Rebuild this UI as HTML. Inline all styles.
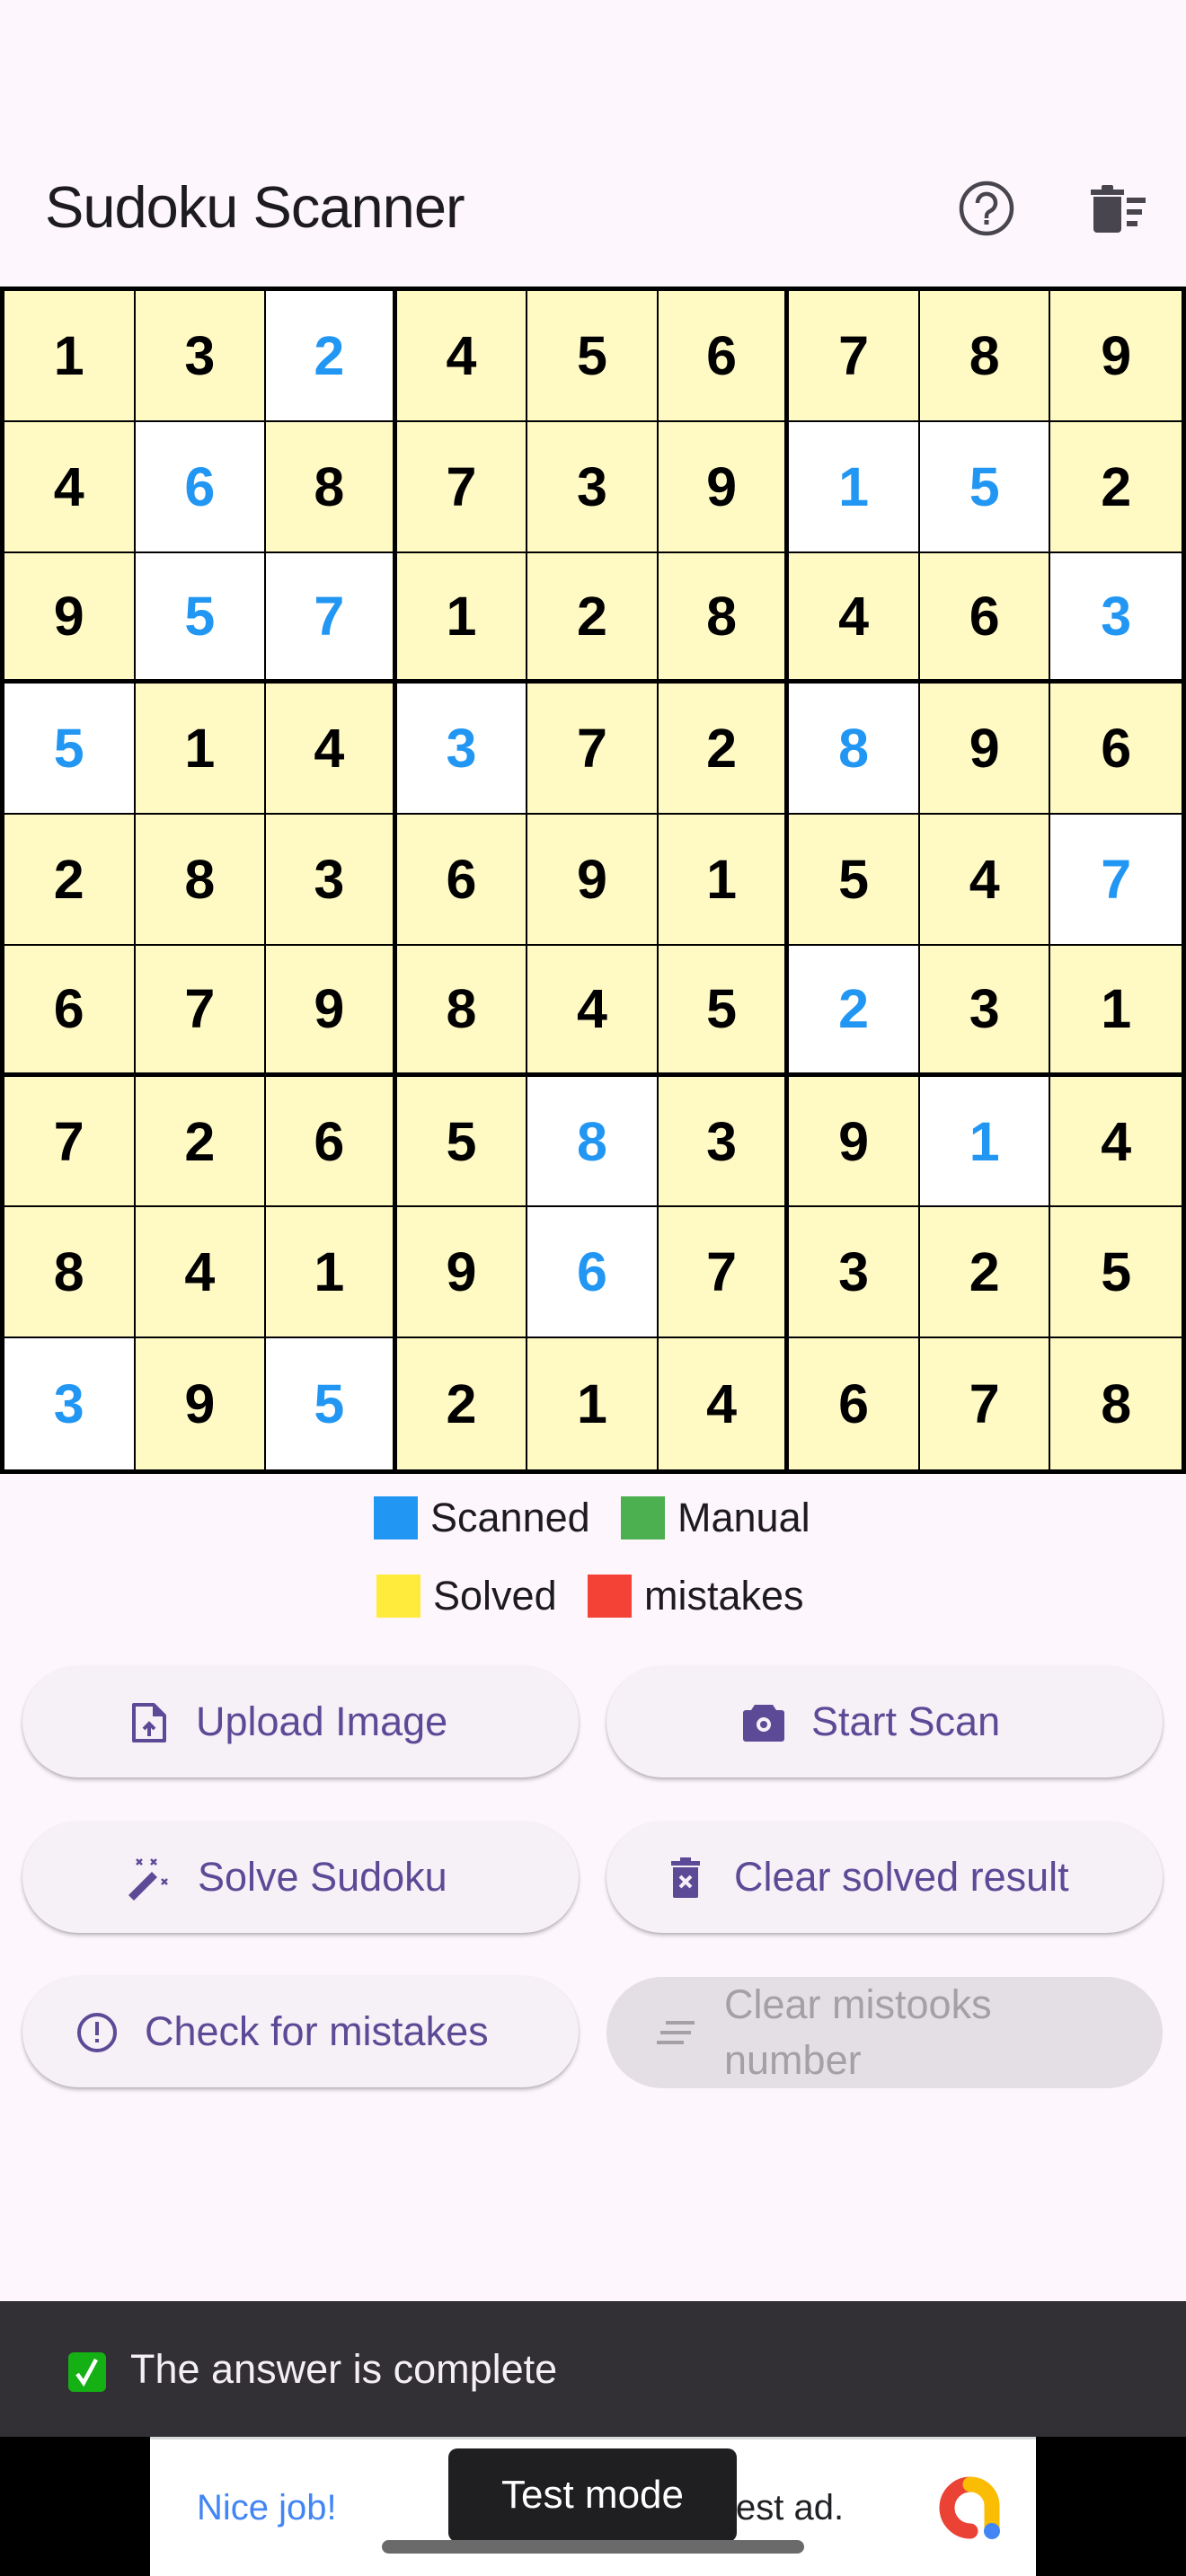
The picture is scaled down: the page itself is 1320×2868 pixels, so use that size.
<!DOCTYPE html>
<html><head><meta charset="utf-8">
<style>
*{box-sizing:border-box;margin:0;padding:0}
html,body{width:1320px;height:2868px;overflow:hidden;background:#fdf7fd;font-family:"Liberation Sans",Arial,sans-serif;position:relative}
.title{position:absolute;left:50px;top:193px;font-size:65px;color:#1d1b20;letter-spacing:-1px}
.g{position:absolute;left:0;top:319px;width:1320px;height:1322px;border:5px solid #000;display:grid;grid-template-columns:repeat(9,1fr);grid-template-rows:repeat(9,1fr);background:#000}
.g div{background:#fff9c4;border-right:2px solid #000;border-bottom:2px solid #000;display:flex;align-items:center;justify-content:center;font-weight:bold;font-size:61px;color:#000}
.g div.w{background:#fff;color:#2196f3}
.g div:nth-child(9n+3),.g div:nth-child(9n+6){border-right-width:5px}
.g div:nth-child(9n){border-right:0}
.g div:nth-child(n+19):nth-child(-n+27),.g div:nth-child(n+46):nth-child(-n+54){border-bottom-width:5px}
.g div:nth-child(n+73){border-bottom:0}
.lg{position:absolute;font-size:45px;color:#1d1b20;display:flex;align-items:center}
.sq{width:49px;height:48px;display:inline-block;margin-right:14px}
.btn{position:absolute;width:619px;height:124px;border-radius:62px;background:#f6f0f7;box-shadow:0 3px 4px rgba(0,0,0,.22),0 1px 2px rgba(0,0,0,.1);color:#5c4a96;font-size:45px;display:flex;align-items:center}
.btn svg{position:absolute}
.btn span{position:absolute}
.dis{background:#e3dfe5;box-shadow:none;color:#a3a0a6}
.snack{position:absolute;left:0;top:2562px;width:1320px;height:151px;background:#322f35;color:#f4eff4;font-size:45px}
.ad{position:absolute;left:0;top:2713px;width:1320px;height:155px;background:#000}
.adw{position:absolute;left:167px;top:0;width:986px;height:155px;background:#fff;border-top:3px solid #d8dadc}
</style></head><body>
<div class="title">Sudoku Scanner</div>
<svg style="position:absolute;left:1066px;top:200px" width="64" height="64" viewBox="0 0 64 64"><circle cx="32" cy="32" r="28" fill="none" stroke="#48454e" stroke-width="4.5"/><path d="M22 26a10 10 0 1 1 14 9c-3 1.5-4 3-4 6v2" fill="none" stroke="#48454e" stroke-width="4.5"/><rect x="29.5" y="45" width="5" height="5" fill="#48454e"/></svg>
<svg style="position:absolute;left:1214px;top:206px" width="66" height="54" viewBox="0 0 66 54"><rect x="0" y="5" width="37" height="6" fill="#48454e"/><rect x="12" y="0" width="13" height="6" rx="2" fill="#48454e"/><path d="M3 13h31v36a4 4 0 0 1-4 4H7a4 4 0 0 1-4-4z" fill="#48454e"/><rect x="40" y="14" width="21" height="6" fill="#48454e"/><rect x="40" y="27" width="17" height="6" fill="#48454e"/><rect x="40" y="40" width="12" height="6" fill="#48454e"/></svg>

<div class="g">
<div>1</div><div>3</div><div class="w">2</div><div>4</div><div>5</div><div>6</div><div>7</div><div>8</div><div>9</div>
<div>4</div><div class="w">6</div><div>8</div><div>7</div><div>3</div><div>9</div><div class="w">1</div><div class="w">5</div><div>2</div>
<div>9</div><div class="w">5</div><div class="w">7</div><div>1</div><div>2</div><div>8</div><div>4</div><div>6</div><div class="w">3</div>
<div class="w">5</div><div>1</div><div>4</div><div class="w">3</div><div>7</div><div>2</div><div class="w">8</div><div>9</div><div>6</div>
<div>2</div><div>8</div><div>3</div><div>6</div><div>9</div><div>1</div><div>5</div><div>4</div><div class="w">7</div>
<div>6</div><div>7</div><div>9</div><div>8</div><div>4</div><div>5</div><div class="w">2</div><div>3</div><div>1</div>
<div>7</div><div>2</div><div>6</div><div>5</div><div class="w">8</div><div>3</div><div>9</div><div class="w">1</div><div>4</div>
<div>8</div><div>4</div><div>1</div><div>9</div><div class="w">6</div><div>7</div><div>3</div><div>2</div><div>5</div>
<div class="w">3</div><div>9</div><div class="w">5</div><div>2</div><div>1</div><div>4</div><div>6</div><div>7</div><div>8</div>
</div>

<div class="lg" style="left:416px;top:1664px"><span class="sq" style="background:#2196f3"></span>Scanned</div>
<div class="lg" style="left:691px;top:1664px"><span class="sq" style="background:#4caf50"></span>Manual</div>
<div class="lg" style="left:419px;top:1751px"><span class="sq" style="background:#ffeb3b"></span>Solved</div>
<div class="lg" style="left:654px;top:1751px"><span class="sq" style="background:#f44336"></span>mistakes</div>

<div class="btn" style="left:25px;top:1855px">
<svg style="left:120px;top:40px" width="42" height="46" viewBox="0 0 42 46"><path d="M4 3h22l12 12v28H4z" fill="none" stroke="#5c4a96" stroke-width="4" stroke-linejoin="round"/><path d="M25 3v13h13" fill="#5c4a96"/><path d="M21 38V24M15 30l6-6 6 6" fill="none" stroke="#5c4a96" stroke-width="4"/></svg>
<span style="left:193px">Upload Image</span></div>
<div class="btn" style="left:675px;top:1855px">
<svg style="left:151px;top:39px" width="48" height="46" viewBox="0 0 48 46"><path d="M14 4h20l4 6h6a3 3 0 0 1 3 3v29a3 3 0 0 1-3 3H4a3 3 0 0 1-3-3V13a3 3 0 0 1 3-3h6z" fill="#5c4a96"/><circle cx="24" cy="26" r="8" fill="#f6f0f7"/><circle cx="24" cy="26" r="4" fill="#5c4a96"/></svg>
<span style="left:228px">Start Scan</span></div>
<div class="btn" style="left:25px;top:2028px">
<svg style="left:115px;top:38px" width="52" height="50" viewBox="0 0 52 50"><path d="M3 44l26-26 6 6-26 26z" fill="#5c4a96"/><path d="M12 4l6 6M18 4l-6 6M28 4l6 6M34 4l-6 6M40 26l6 6M46 26l-6 6" stroke="#5c4a96" stroke-width="2.5"/></svg>
<span style="left:195px">Solve Sudoku</span></div>
<div class="btn" style="left:675px;top:2028px">
<svg style="left:70px;top:40px" width="36" height="46" viewBox="0 0 36 46"><rect x="2" y="4" width="32" height="5" fill="#5c4a96"/><rect x="12" y="0" width="12" height="5" fill="#5c4a96"/><path d="M4 11h28v32a2 2 0 0 1-2 2H6a2 2 0 0 1-2-2z" fill="#5c4a96"/><path d="M12 21l12 12M24 21L12 33" stroke="#f6f0f7" stroke-width="4"/></svg>
<span style="left:142px">Clear solved result</span></div>
<div class="btn" style="left:25px;top:2200px">
<svg style="left:59px;top:39px" width="48" height="48" viewBox="0 0 48 48"><circle cx="24" cy="24" r="20" fill="none" stroke="#5c4a96" stroke-width="4"/><rect x="22" y="12" width="4" height="15" fill="#5c4a96"/><rect x="22" y="31" width="4" height="4" fill="#5c4a96"/></svg>
<span style="left:136px">Check for mistakes</span></div>
<div class="btn dis" style="left:675px;top:2201px">
<svg style="left:56px;top:49px" width="42" height="28" viewBox="0 0 42 28"><rect x="10" y="0" width="32" height="4" fill="#a3a0a6"/><rect x="4" y="11" width="34" height="4" fill="#a3a0a6"/><rect x="0" y="22" width="30" height="4" fill="#a3a0a6"/></svg>
<span style="left:131px;top:0px;line-height:62px">Clear mistooks<br>number</span></div>

<div class="snack">
<svg style="position:absolute;left:76px;top:57px" width="42" height="44" viewBox="0 0 42 44"><rect x="0" y="0" width="42" height="44" rx="6" fill="#14b014"/><path d="M10 24l7 10 14-26" fill="none" stroke="#fff" stroke-width="4.5"/></svg>
<div style="position:absolute;left:145px;top:50px">The answer is complete</div>
</div>

<div class="ad"><div class="adw">
<div style="position:absolute;left:52px;top:54px;font-size:40px;color:#4285f4">Nice job!</div>
<div style="position:absolute;left:652px;top:54px;font-size:40px;color:#202124">est ad.</div>
<svg style="position:absolute;left:873px;top:38px" width="76" height="76" viewBox="0 0 76 76"><path d="M40 64A26 26 0 1 1 40 12" fill="none" stroke="#ea4335" stroke-width="17" stroke-linecap="round"/><path d="M40 12a24 24 0 0 1 24 24v28" fill="none" stroke="#fbbc04" stroke-width="17" stroke-linecap="round"/><circle cx="64" cy="64" r="9" fill="#4285f4"/></svg>
<div style="position:absolute;left:332px;top:10px;width:321px;height:104px;background:#1f1f22;border-radius:10px;color:#fff;font-size:44px;text-align:center;line-height:104px">Test mode</div>
<div style="position:absolute;left:258px;top:112px;width:470px;height:15px;background:#6a6a6a;border-radius:8px"></div>
</div></div>
</body></html>
